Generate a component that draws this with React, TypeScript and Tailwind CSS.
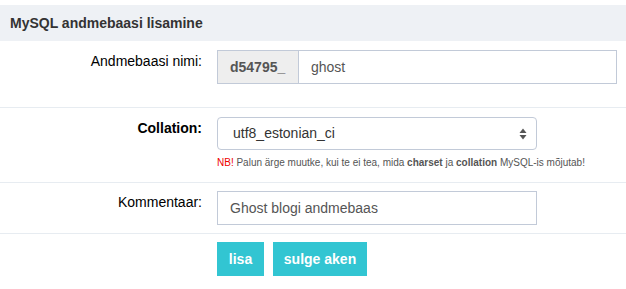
import React from "react";

function Arrows() {
  return (
    <svg width="8" height="12" viewBox="0 0 8 12" className="text-[#555]">
      <path d="M4 0.5 L7.5 5 L0.5 5 Z" fill="currentColor" />
      <path d="M4 11.5 L7.5 7 L0.5 7 Z" fill="currentColor" />
    </svg>
  );
}

export default function App() {
  return (
    <div className="w-[626px] h-[289px] bg-white text-[14px] text-[#333]" style={{ fontFamily: '"Liberation Sans", Arial, sans-serif' }}>
      <div className="h-[5px]" />
      <div className="h-[36px] bg-[#eef1f5] flex items-center pl-[10px] font-bold text-[14px] text-[#333]">
        MySQL andmebaasi lisamine
      </div>

      {/* Row 1 */}
      <div className="flex border-b border-[#e7ecf1] pt-[9px] pb-[23px]">
        <div className="w-[202px] text-right pt-[1px] text-black leading-[20px]">Andmebaasi nimi:</div>
        <div className="ml-[15px] flex w-[400px] h-[34px] border border-[#c2cad8]">
          <div className="w-[81px] bg-[#eeeeee] border-r border-[#c2cad8] flex items-center pl-[12px] font-bold text-[#555]">d54795_</div>
          <div className="flex items-center pl-[12px] text-[#555]">ghost</div>
        </div>
      </div>

      {/* Row 2 */}
      <div className="flex border-b border-[#e7ecf1] pt-[9px] h-[75px]">
        <div className="w-[202px] text-right pt-[1px] text-black font-bold leading-[20px]">Collation:</div>
        <div className="ml-[15px] flex flex-col">
          <div className="w-[320px] h-[33px] border border-[#c2cad8] rounded-[4px] flex items-center justify-between pl-[15px] pr-[9px] text-[#333]">
            <span>utf8_estonian_ci</span>
            <Arrows />
          </div>
          <div className="mt-[7px] text-[10px] text-[#555] leading-[12px]">
            <span className="text-[#e00]">NB!</span> Palun ärge muutke, kui te ei tea, mida <b>charset</b> ja <b>collation</b> MySQL-is mõjutab!
          </div>
        </div>
      </div>

      {/* Row 3 */}
      <div className="flex border-b border-[#e7ecf1] pt-[8px] pb-[8px]">
        <div className="w-[202px] text-right pt-[1px] text-black leading-[20px]">Kommentaar:</div>
        <div className="ml-[15px] w-[320px] h-[34px] border border-[#c2cad8] flex items-center pl-[12px] text-[#555]">
          Ghost blogi andmebaas
        </div>
      </div>

      {/* Buttons */}
      <div className="flex pl-[217px] pt-[8px] gap-[9px]">
        <button className="h-[34px] w-[47px] bg-[#32c5d2] text-white font-bold text-[14px]">lisa</button>
        <button className="h-[34px] w-[94px] bg-[#32c5d2] text-white font-bold text-[14px]">sulge aken</button>
      </div>
    </div>
  );
}
